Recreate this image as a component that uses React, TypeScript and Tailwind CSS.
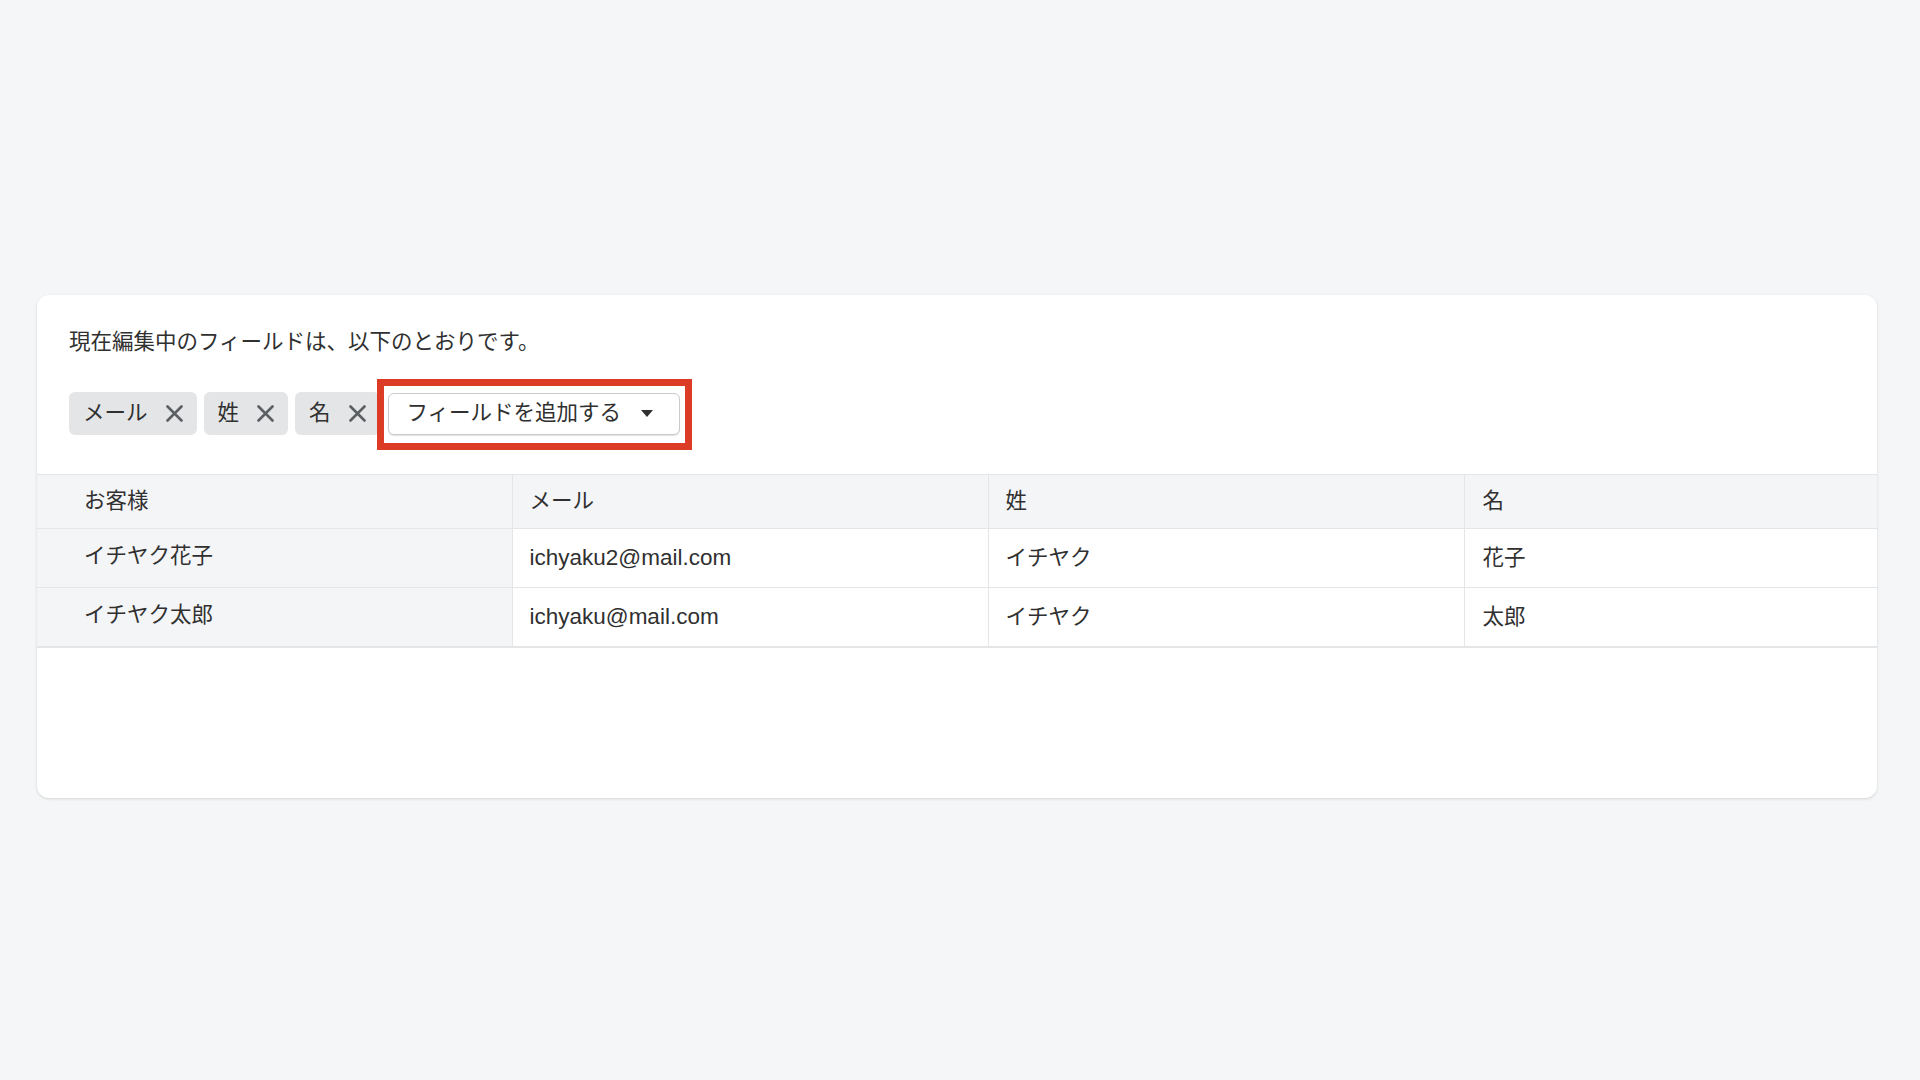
const font = { fontFamily: '"Liberation Sans", "Noto Sans CJK JP", sans-serif' }

const fields = ['メール', '姓', '名']

const rows = [
  { name: 'イチヤク花子', email: 'ichyaku2@mail.com', last: 'イチヤク', first: '花子' },
  { name: 'イチヤク太郎', email: 'ichyaku@mail.com', last: 'イチヤク', first: '太郎' },
]

function Chip({ label }: { label: string }) {
  return (
    <div className="flex h-[43px] items-center gap-[18px] rounded-[6px] bg-[#e4e5e7] pl-[14px] pr-[14px] text-[21.5px] text-[#303030]">
      <span>{label}</span>
      <svg width="17" height="17" viewBox="0 0 17 17" className="shrink-0">
        <path d="M1.5 1.5l14 14M15.5 1.5l-14 14" stroke="#5c5f62" strokeWidth="2.6" strokeLinecap="round" />
      </svg>
    </div>
  )
}

export default function App() {
  return (
    <div className="min-h-screen bg-[#f5f6f8] pt-[295px]" style={font}>
      <div className="ml-[37px] w-[1840px] overflow-hidden rounded-[12px] bg-white shadow-[0_1px_3px_rgba(0,0,0,0.14)]">
        <div className="px-[32px] pt-[32px] pb-[39px]">
          <p className="text-[21.5px] leading-[30px] text-[#303030]">現在編集中のフィールドは、以下のとおりです。</p>
          <div className="mt-[35px] flex items-center gap-[7px]">
            {fields.map((f) => (
              <Chip key={f} label={f} />
            ))}
            <div className="relative ml-[1px]">
              <button className="flex h-[42px] w-[292px] items-center justify-between rounded-[6px] border border-[#c9cccf] bg-white pl-[18px] pr-[26px] text-[21.5px] text-[#303030] shadow-[0_1px_1px_rgba(0,0,0,0.12)]">
                <span>フィールドを追加する</span>
                <svg width="12" height="7" viewBox="0 0 12 7">
                  <path d="M0 0h12L6 7z" fill="#303030" />
                </svg>
              </button>
              <div className="pointer-events-none absolute -top-[14px] -bottom-[15px] -left-[11px] -right-[12px] border-[7px] border-[#dc3b26]" />
            </div>
          </div>
        </div>

        <table className="w-full border-collapse text-[21.5px] text-[#303030]">
          <colgroup>
            <col className="w-[475px]" />
            <col className="w-[476px]" />
            <col className="w-[476px]" />
            <col />
          </colgroup>
          <thead>
            <tr className="h-[54px] border-t border-b border-[#e4e5e7] bg-[#f4f5f7] text-left">
              <th className="pl-[47px] font-normal">お客様</th>
              <th className="border-l border-[#e4e5e7] pl-[17px] font-normal">メール</th>
              <th className="border-l border-[#e4e5e7] pl-[17px] font-normal">姓</th>
              <th className="border-l border-[#e4e5e7] pl-[18px] font-normal">名</th>
            </tr>
          </thead>
          <tbody>
            {rows.map((r, i) => (
              <tr
                key={r.email}
                className={i === rows.length - 1 ? 'h-[59px] border-b-2 border-[#e4e5e7]' : 'h-[59px] border-b border-[#e4e5e7]'}
              >
                <td className="bg-[#f4f5f7] pl-[47px] pb-[4px]">{r.name}</td>
                <td className="border-l border-[#e4e5e7] pl-[17px] text-[22.5px]">{r.email}</td>
                <td className="border-l border-[#e4e5e7] pl-[17px]">{r.last}</td>
                <td className="border-l border-[#e4e5e7] pl-[18px]">{r.first}</td>
              </tr>
            ))}
          </tbody>
        </table>
        <div className="h-[150px]" />
      </div>
    </div>
  )
}
